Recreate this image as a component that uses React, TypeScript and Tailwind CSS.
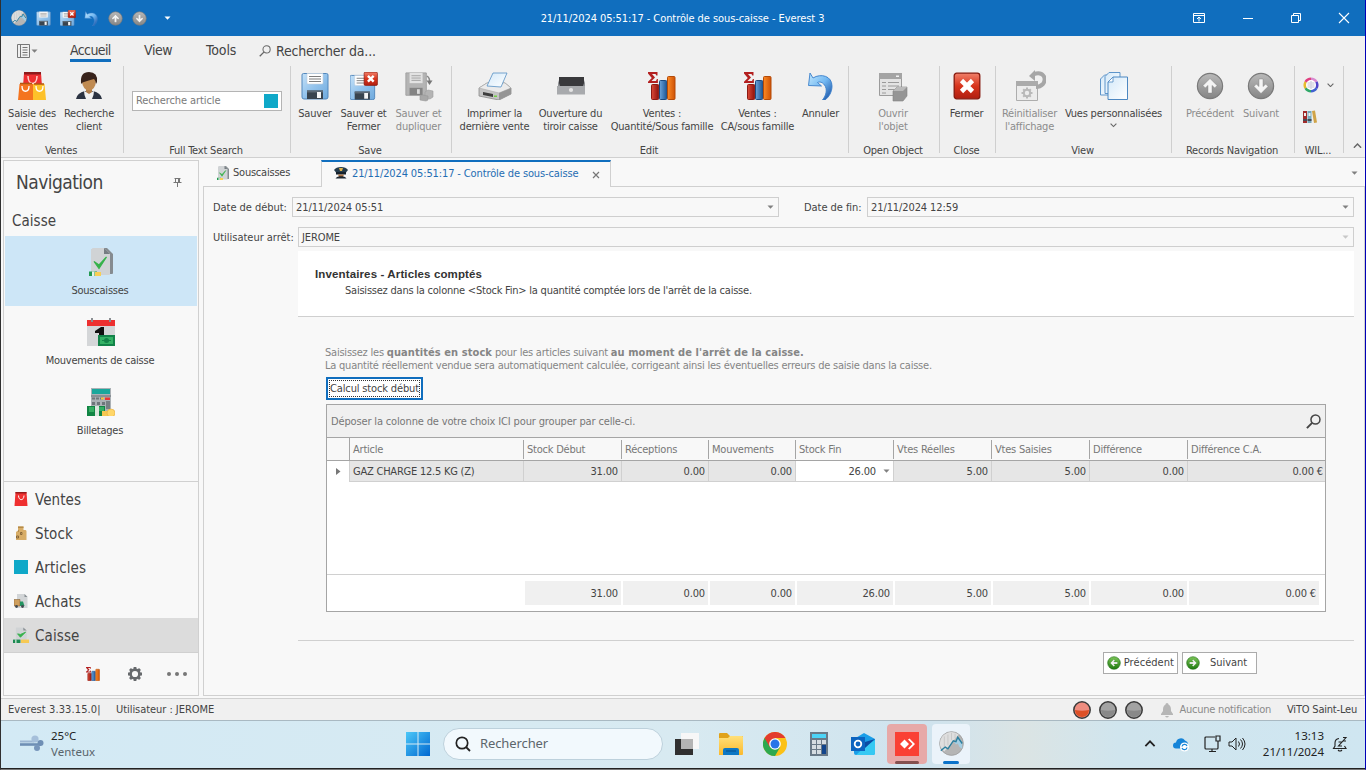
import React from "react";

type P = { children?: React.ReactNode; className?: string };

const Svg = ({ s = 28, vb = 28, children, className = "" }: P & { s?: number; vb?: number }) => (
  <svg width={s} height={s} viewBox={`0 0 ${vb} ${vb}`} className={`block shrink-0 ${className}`} fill="none">
    {children}
  </svg>
);

const Defs = () => (
  <svg width="0" height="0" className="absolute">
    <defs>
      <linearGradient id="disk" x1="0" y1="0" x2="1" y2="1"><stop offset="0" stopColor="#c4e1f8" /><stop offset=".5" stopColor="#93c3ec" /><stop offset="1" stopColor="#6ea9dd" /></linearGradient>
      <linearGradient id="red" x1="0" y1="0" x2="0" y2="1"><stop offset="0" stopColor="#f0806a" /><stop offset=".5" stopColor="#d8341c" /><stop offset="1" stopColor="#b01f10" /></linearGradient>
      <linearGradient id="grey" x1="0" y1="0" x2="0" y2="1"><stop offset="0" stopColor="#b9b9b9" /><stop offset="1" stopColor="#858585" /></linearGradient>
      <linearGradient id="green" x1="0" y1="0" x2="0" y2="1"><stop offset="0" stopColor="#7cc558" /><stop offset="1" stopColor="#1f7a10" /></linearGradient>
      <linearGradient id="undo" x1="0" y1="0" x2="1" y2="1"><stop offset="0" stopColor="#c4e9fd" /><stop offset=".5" stopColor="#72b8f2" /><stop offset="1" stopColor="#0f469c" /></linearGradient>
      <linearGradient id="barR"><stop offset="0" stopColor="#dc4a38" /><stop offset="1" stopColor="#8f120c" /></linearGradient>
      <linearGradient id="barB"><stop offset="0" stopColor="#6ba4dc" /><stop offset="1" stopColor="#1f5796" /></linearGradient>
      <linearGradient id="barO"><stop offset="0" stopColor="#fb8a26" /><stop offset="1" stopColor="#cf5205" /></linearGradient>
      <linearGradient id="page" x1="0" y1="0" x2="1" y2="1"><stop offset="0" stopColor="#d4e9f9" /><stop offset="1" stopColor="#ffffff" /></linearGradient>
      <linearGradient id="win" x1="0" y1="0" x2="1" y2="1"><stop offset="0" stopColor="#4cc8f8" /><stop offset="1" stopColor="#0067d0" /></linearGradient>
      <linearGradient id="folder" x1="0" y1="0" x2="0" y2="1"><stop offset="0" stopColor="#ffe07a" /><stop offset="1" stopColor="#fbb92c" /></linearGradient>
    </defs>
  </svg>
);

const DiskShape = () => (
  <g>
    <path d="M2.500 1.500h23q1.500 0 1.500 1.500v22q0 2-2 2H3q-2 0-2-2V3q0-1.500 1.500-1.500z" fill="url(#disk)" stroke="#5288bd" />
    <path d="M6 1.500h16V11q0 1-1 1H7q-1 0-1-1z" fill="#fff" stroke="#c3ced8" strokeWidth=".6" />
    <path d="M8 4.500h12M8 7h12M8 9.500h12" stroke="#7d7d7d" />
    <path d="M6 18.500h16V27H6z" fill="#39444f" /><path d="M6 18.500h16v2H6z" fill="#5d6975" />
    <path d="M16 20h4v6h-4z" fill="#f6f6f6" />
  </g>
);
const RedX = () => (
  <g>
    <rect x="1.200" y="1.200" width="25.600" height="25.600" rx="2.500" fill="url(#red)" stroke="#86180c" strokeWidth="1.300" />
    <path d="M8.500 8.500l11 11M19.500 8.500l-11 11" stroke="#fff" strokeWidth="4.600" />
  </g>
);
const Disk = ({ s = 28 }: { s?: number }) => <Svg s={s}><DiskShape /></Svg>;
const DiskClose = ({ s = 28 }: { s?: number }) => (
  <Svg s={s}><g transform="translate(-1 2) scale(.95)"><DiskShape /></g><g transform="translate(13.500 -.5) scale(.52)"><RedX /></g></Svg>
);
const DiskCopy = () => (
  <Svg s={30} vb={30}>
    <g transform="scale(.93)">
      <path d="M2 1h22v24H2z" fill="#b4b4b4" stroke="#a0a0a0" /><path d="M6 1h14v11H6z" fill="#e2e2e2" />
      <path d="M8 4h10M8 6.500h10M8 9h10" stroke="#a0a0a0" /><path d="M6 17h14v8H6z" fill="#848484" /><path d="M14 18.500h3v5h-3z" fill="#dcdcdc" />
    </g>
    <path d="M23 4q3 2 2.500 6" stroke="#888" strokeWidth="1.500" /><path d="M22.500 8.500h6L25.500 13z" fill="#777" />
    <path d="M21 20l3-2 5 1v6l-3 2-5-1z" fill="#b4b4b4" stroke="#9d9d9d" strokeWidth=".6" /><path d="M16 24l2-1 6 1v4l-2 1-6-1z" fill="#a8a8a8" stroke="#979797" strokeWidth=".6" />
  </Svg>
);
const Undo = ({ s = 28 }: { s?: number }) => (
  <Svg s={s}>
    <path d="M3 1l3 5C14 1 25 4 25 14c0 6-3 11-7 14h-2.500c4-5 5-11 2-15-2-3-5-3.500-7-2.500l4 3.500-13-.5z" fill="url(#undo)" stroke="#3a7fcb" strokeWidth=".9" />
  </Svg>
);
const ArrowBall = ({ s = 28, dir = 0, fill = "url(#grey)", ring = "#7a7a7a" }: { s?: number; dir?: number; fill?: string; ring?: string }) => (
  <Svg s={s}>
    <circle cx="14" cy="14" r="12.600" fill={fill} stroke={ring} strokeWidth="1.200" />
    <path transform={`rotate(${dir} 14 14)`} d="M14 6.500l7 7-2.200 2.400-2.800-2.500V21h-4v-7.600l-2.800 2.500L7 13.500z" fill="#f4f4f4" stroke={ring} strokeWidth=".4" />
  </Svg>
);
const Logo = ({ s = 16 }: { s?: number }) => (
  <Svg s={s}>
    <circle cx="14" cy="14" r="13.300" fill="#b5b5b5" stroke="#9a9a9a" strokeWidth=".8" /><path d="M1 14A13 13 0 0 1 22 4L6 23Q1 19 1 14z" fill="#dedede" />
    <path d="M6 6v12M10 4v12M14 2v8M18 3v5" stroke="#c5c5c5" />
    <path d="M16 11l3 1 2-5 5 7v6q-4-2-5-6l-2 1z" fill="#a5cfe4" /><path d="M2 22l5-4 3 2 6-9 3 1 2-5 5 7" stroke="#2b7f9f" strokeWidth="1.500" />
  </Svg>
);
const Bags = () => (
  <Svg>
    <path d="M6 1h17l2 27H4z" fill="#ee2e31" /><path d="M6 0h17v2.500H6z" fill="#8f1a1c" /><path d="M10 4c0 10 9 10 9 0" stroke="#ffd3cd" strokeWidth="1.500" />
    <path d="M1.500 12H15v16H0z" fill="#f4741f" /><path d="M15 12h11.500L28 28H15z" fill="#fdc12a" /><path d="M2 11.500h12M16 12h10" stroke="#b45512" strokeWidth="1.500" />
    <path d="M4 14c0 7 7 7 7 0M18 14c0 7 7 7 7 0" stroke="#fff" strokeWidth="1.300" />
  </Svg>
);
const Person = () => (
  <Svg>
    <path d="M1 27q1-6 9-8h8q8 2 9 8z" fill="#2b3342" /><path d="M9 19q0 4 2 8h6q2-4 2-8l-5 2z" fill="#f1f1f1" />
    <path d="M11 14h6v6l-3 2-3-2z" fill="#b07d49" /><ellipse cx="14" cy="10" rx="6.800" ry="8.600" fill="#c08b52" />
    <path d="M6 11Q5 0 14 0t8 10l-1 2q0-3-2-5Q15 8 9 10q-2 0-2 2z" fill="#38231b" />
  </Svg>
);
const Printer = () => (
  <svg width="34" height="28" viewBox="0 0 34 28" fill="none" className="block shrink-0">
    <path d="M1 16l8-5h18l6 5v6l-12 6L1 24z" fill="#c4c4c4" stroke="#8a8a8a" strokeWidth=".8" /><path d="M1 16l8-5h18l6 5-12 5z" fill="#ebebeb" stroke="#aaa" strokeWidth=".6" />
    <path d="M21 21l12-5v6l-12 6z" fill="#959595" /><path d="M15 1h14l-6 14-14-1z" fill="url(#page)" stroke="#5791c4" strokeWidth=".8" />
    <path d="M5 20l10 2v3L5 23z" fill="#3e3e3e" /><path d="M16 23.500h3v1.500h-3z" fill="#71cf43" />
  </svg>
);
const Drawer = () => (
  <Svg><path d="M2 5h25v10H2z" fill="#39393c" /><path d="M1 8l2 6v2H1zM28 8l-2 6v2h2z" fill="#8f9194" /><path d="M0 14h28v8.500H0z" fill="#a8aaad" /><circle cx="14" cy="18" r="2.100" fill="#e4e4e4" /></Svg>
);
const SigmaBars = ({ s = 28 }: { s?: number }) => (
  <Svg s={s}>
    <path d="M0 0h9.500v3.500H8.300L7.500 2H4l3 3.500L3.500 9H8l.9-2h1v4H0V9.700L3.800 6 0 1.500z" fill="#b32020" />
    <rect x="3.500" y="12.500" width="7.200" height="15" rx="1" fill="url(#barR)" stroke="#8d1a12" /><rect x="11.500" y="8.500" width="7.200" height="19" rx="1" fill="url(#barB)" stroke="#1c4a80" />
    <rect x="19.500" y="4.500" width="7.500" height="23" rx="1" fill="url(#barO)" stroke="#b44a08" />
  </Svg>
);
const OpenObj = () => (
  <Svg s={30} vb={30}>
    <path d="M1.500 1.500h22v22h-22z" fill="#e3e3e3" stroke="#9b9b9b" /><path d="M1 1h23v6H1z" fill="#a4a4a4" /><path d="M18 3.500h3v1.500h-3z" fill="#f2f2f2" />
    <path d="M4 10.500h4m2 0h11M4 14h4m2 0h11M4 17.500h4m2 0h11M4 21h4" stroke="#9a9a9a" /><path d="M15 19l4-4h10v9l-4 5H15z" fill="#959595" stroke="#858585" strokeWidth=".6" /><path d="M15 19l4-4h10l-4 4z" fill="#bababa" />
  </Svg>
);
const Reset = () => (
  <Svg s={32} vb={32} className="-mt-[2px]">
    <path d="M2.500 13.500h21v17h-21z" fill="#ececec" stroke="#adadad" /><path d="M2 11h22v5H2z" fill="#ababab" />
    <path d="M20 4c9-3 13 4 9 10q-3 3-7 3" stroke="#a6a6a6" strokeWidth="4" /><path d="M15 6l6-6v11z" fill="#a6a6a6" />
    <circle cx="13" cy="23" r="3.200" stroke="#b9b9b9" strokeWidth="2" /><path d="M13 17.500v2m0 7v2m-5.500-5.500h2m7 0h2m-9.300-3.800 1.400 1.400m4.800 4.800 1.400 1.400m0-7.600-1.400 1.400m-4.800 4.800-1.400 1.400" stroke="#b9b9b9" strokeWidth="2" />
  </Svg>
);
const Views = () => (
  <Svg>
    <path d="M.5 7l4-4H11v20H.5z" fill="url(#page)" stroke="#5e95ca" /><path d="M5 4.500l4-4h11v21H5z" fill="url(#page)" stroke="#5e95ca" /><path d="M8 10l5-5h14.500v22.500H8z" fill="url(#page)" stroke="#4d88c2" /><path d="M8 10h5V5z" fill="#fff" stroke="#4d88c2" strokeWidth=".8" />
  </Svg>
);
const Gear = () => (
  <Svg s={16} vb={16}><circle cx="8" cy="8" r="4.400" stroke="#66696c" strokeWidth="2.600" /><path d="M8 1v3m0 8v3M1 8h3m8 0h3M3 3l2 2m6 6 2 2m0-10-2 2m-6 6-2 2" stroke="#66696c" strokeWidth="2.800" /></Svg>
);
const DocCheck = ({ s = 28 }: { s?: number }) => (
  <Svg s={s}>
    <path d="M8 0h12l6 6v19q0 1-1 1H10z" fill="#858b90" /><path d="M5 1q0-1 1-1h11l6 6v20q0 1-1 1H5q-1 0-1-1V1z" fill="#d0d3d5" /><path d="M17 0v6h6z" fill="#767d82" />
    <path d="M7 13.500l5 3.500 7.500-8L12 20.500z" fill="#36b24a" stroke="#36b24a" strokeWidth="1.200" /><path d="M2 23.500h8V28H2z" fill="#239a50" /><path d="M5 23.500h2.500V28H5z" fill="#e9f2e9" /><path d="M8 24h6v4H8z" fill="#f8cf55" />
  </Svg>
);
const CaissePic = () => (
  <Svg s={16}><path d="M5 1h13l6 5v21H5z" fill="#d0d3d5" /><path d="M18 1v5h6z" fill="#8b9195" /><path d="M8 12l5 6 9-9-9 4z" fill="#36b24a" stroke="#36b24a" strokeWidth="1.500" /><path d="M0 22h13v6H0z" fill="#1c8a52" /><path d="M4 22h2v6H4z" fill="#e8f4e8" /><path d="M14 22h14v6H14z" fill="#f6c954" /></Svg>
);
const Calendar = () => (
  <Svg>
    <path d="M0 2h28v26H0z" fill="#d4d6d8" /><path d="M0 2h28v6H0z" fill="#ed3030" /><path d="M4 0h2v4H4zM22 0h2v4h-2z" fill="#8a8e92" />
    <path d="M8 13l6-4h3v19h-5V15H8z" fill="#111" /><path d="M11 17h17v11H11z" fill="#128349" /><path d="M13 19h13v7H13z" fill="#34b265" /><path d="M15 22.500h9" stroke="#128349" /><circle cx="19.500" cy="22.500" r="2.500" fill="#128349" />
  </Svg>
);
const Till = () => (
  <Svg>
    <path d="M4 0h20v27H4z" fill="#abb1b5" /><path d="M5 1h18v5H5z" fill="#1aa79c" /><path d="M4 8h20" stroke="#697076" /><path d="M5 9.500h3v2H5zm4 0h3v2H9zm4 0h3v2h-3zM5 14h3v3H5zm5 0h3v3h-3zm5 0h3v3h-3z" fill="#6f767b" />
    <path d="M14 9.500h3v2h-3z" fill="#f6c340" /><path d="M18 9.500h5v2.500h-5z" fill="#e93434" /><path d="M19 13h4v8h-4z" fill="#787f84" />
    <path d="M0 18h18v10H0z" fill="#118544" /><path d="M2 19h5v5H2zM12 19h5v4h-5z" fill="#35ad62" /><path d="M8 18h4v10H8z" fill="#dbe6dd" /><path d="M15 23h9v5h-9z" fill="#f7c751" /><circle cx="24" cy="25" r="4" fill="#ffd668" stroke="#e5ad3c" strokeWidth=".6" />
  </Svg>
);
const Officer = () => (
  <Svg s={14} vb={14}><path d="M0 4q2-3 7-3t7 3l-2 2.500H2z" fill="#243b4b" /><path d="M5 2h4l-1 3H6z" fill="#e0b34a" /><path d="M2 6h10v2.500H2z" fill="#16222c" /><path d="M4 8.500h6L9 11H5z" fill="#a87143" /><path d="M1.500 12.500q1-2 4-2.300h3q3 .3 4 2.300z" fill="#1d2730" /></Svg>
);
const Mag = ({ s = 13, c = "#505050", w = 1.3 }: { s?: number; c?: string; w?: number }) => (
  <Svg s={s} vb={13}><circle cx="8.200" cy="4.800" r="3.900" stroke={c} strokeWidth={w} /><path d="M5.300 7.700L.8 12.200" stroke={c} strokeWidth={w * 1.300} /></Svg>
);
const Down = () => <svg width="7" height="4" viewBox="0 0 7 4" className="block shrink-0"><path d="M.5 .5h6L3.500 3.700z" fill="#808080" /></svg>;
const Chev = ({ up = false, w = 8, c = "#666" }: { up?: boolean; w?: number; c?: string }) => (
  <svg width={w} height={w / 2 + 1} viewBox="0 0 8 5" className="block shrink-0" fill="none"><path d={up ? "M.7 4.300L4 1l3.300 3.300" : "M.7.700L4 4l3.300-3.300"} stroke={c} strokeWidth="1.300" /></svg>
);

const Btn = ({ icon, lines, className, off, menu }: { icon: React.ReactNode; lines: string[]; className: string; off?: boolean; menu?: boolean }) => (
  <div className={`flex flex-col items-center ${off ? "text-[#8c8c8c]" : "text-[#444]"} ${className}`}>
    <div className="flex h-[41px] items-start justify-center pt-[6px]">{icon}</div>
    {lines.map((l) => <div key={l} className="h-[13px] whitespace-nowrap leading-[13px]">{l}</div>)}
    {menu && <div className="pt-[3px]"><Chev w={7} /></div>}
  </div>
);
const Group = ({ title, className, children }: P & { title: string }) => (
  <div className={`flex h-[87px] shrink-0 flex-col border-r border-[#cfcfcf] ${className}`}>
    <div className="flex h-[76px] justify-center pr-[2px]">{children}</div>
    <div className="mt-[2px] h-[9px] pr-[2px] text-center leading-[14px]">{title}</div>
  </div>
);

const NavTile = ({ icon, label, on }: { icon: React.ReactNode; label: string; on?: boolean }) => (
  <div className={`mx-px flex h-[70px] flex-col items-center pt-3 ${on ? "bg-[#cde6f7]" : ""}`}>{icon}<div className="mt-[8px] pr-[2px] leading-[14px]">{label}</div></div>
);
const NavRow = ({ icon, label, on }: { icon: React.ReactNode; label: string; on?: boolean }) => (
  <div className={`flex h-[34px] items-center gap-[6px] pl-[9px] text-[15px] tracking-[0.1px] ${on ? "bg-[#dcdcdc]" : ""}`}><div className="flex w-4 justify-center">{icon}</div><span className="pt-[2px]">{label}</span></div>
);

const cols = "grid grid-cols-[23px_174px_98px_87px_87px_98px_98px_98px_98px_1fr]";
const heads = ["Article", "Stock Début", "Réceptions", "Mouvements", "Stock Fin", "Vtes Réelles", "Vtes Saisies", "Différence", "Différence C.A."];
const values = ["31.00", "0.00", "0.00", "26.00", "5.00", "5.00", "0.00", "0.00 €"];

const Title = () => (
  <header className="flex h-9 shrink-0 items-center bg-[#106ebe] text-white">
    <div className="flex w-[340px] items-center pl-[10px]">
      <Logo s={16} />
      <div className="ml-[9px]"><Disk s={15} /></div><div className="ml-[9px]"><DiskClose s={16} /></div><div className="ml-2"><Undo s={15} /></div>
      <div className="ml-[9px]"><ArrowBall s={15} /></div><div className="ml-[9px]"><ArrowBall s={15} dir={180} /></div>
      <svg width="7" height="4" viewBox="0 0 7 4" className="ml-[17px]"><path d="M.5 .5h6L3.500 3.700z" fill="#fff" /></svg>
    </div>
    <div className="flex-1 pr-[1px] pt-px text-center leading-4 tracking-[-0.08px]">21/11/2024 05:51:17 - Contrôle de sous-caisse - Everest 3</div>
    <div className="flex w-[340px] items-center justify-end pr-[15px]">
      <Svg s={12} vb={12}><path d="M.5 1.500h11v9H.5zM.5 3.500h11M6 9.500V5M4 7l2-2 2 2" stroke="#fff" /></Svg>
      <Svg s={12} vb={12} className="ml-[37px]"><path d="M1 6.500h10" stroke="#fff" /></Svg>
      <Svg s={12} vb={12} className="ml-[36px]"><path d="M1.500 3.500h7v7h-7zM3.500 3.500v-2h7v7h-2" stroke="#fff" /></Svg>
      <Svg s={12} vb={12} className="ml-[36px]"><path d="M1 1l10 10M11 1L1 11" stroke="#fff" strokeWidth="1.100" /></Svg>
    </div>
  </header>
);

const Ribbon = () => (
  <section className="flex h-[122px] shrink-0 flex-col border-b border-[#d0d0d0] bg-[#f0f0f0]">
    <div className="flex h-[30px] text-[14px] leading-7 tracking-[-0.6px] text-[#444]">
      <div className="flex w-[69px] items-center pl-4"><Svg s={14} vb={14}><path d="M.5 .5h12v13H.5zM3.500 .5v13M5.500 3.500h5m-5 2.500h5m-5 2.500h5m-5 2.500h5" stroke="#777" /></Svg><Down /></div>
      <div className="h-[26px] w-[41px] border-b-[3px] border-[#106ebe]">Accueil</div>
      <div className="ml-[33px] w-[62px] tracking-[-0.4px]">View</div>
      <div className="w-[53px] tracking-[-0.1px]">Tools</div>
      <div className="flex items-center gap-[5px]"><Mag s={12} c="#666" w={1.1} /><span className="tracking-[-0.2px]">Rechercher da...</span></div>
    </div>
    <div className="flex tracking-[-0.2px]">
      <Group title="Ventes" className="w-[123px]">
        <Btn icon={<Bags />} lines={["Saisie des", "ventes"]} className="w-[56px]" /><Btn icon={<Person />} lines={["Recherche", "client"]} className="w-[58px]" />
      </Group>
      <Group title="Full Text Search" className="w-[167px]">
        <div className="ml-[2px] mt-[25px] flex h-5 w-[150px] items-center justify-between border border-[#b4b4b4] bg-white px-[3px] tracking-[-0.1px] text-[#7a7a7a]"><span className="pt-px">Recherche article</span><div className="size-[14px] bg-[#0fa8c8]" /></div>
      </Group>
      <Group title="Save" className="w-[161px]">
        <Btn icon={<Disk />} lines={["Sauver"]} className="w-[43px]" /><Btn icon={<DiskClose />} lines={["Sauver et", "Fermer"]} className="w-[54px]" /><Btn icon={<DiskCopy />} lines={["Sauver et", "dupliquer"]} className="w-[56px]" off />
      </Group>
      <Group title="Edit" className="w-[397px]">
        <Btn icon={<Printer />} lines={["Imprimer la", "dernière vente"]} className="w-[80px]" /><Btn icon={<Drawer />} lines={["Ouverture du", "tiroir caisse"]} className="w-[72px]" />
        <Btn icon={<SigmaBars />} lines={["Ventes :", "Quantité/Sous famille"]} className="w-[111px]" /><Btn icon={<SigmaBars />} lines={["Ventes :", "CA/sous famille"]} className="w-[80px]" /><Btn icon={<Undo />} lines={["Annuler"]} className="w-[46px]" />
      </Group>
      <Group title="Open Object" className="w-[91px]"><Btn icon={<OpenObj />} lines={["Ouvrir", "l'objet"]} className="w-[60px]" off /></Group>
      <Group title="Close" className="w-[56px]"><Btn icon={<Svg><RedX /></Svg>} lines={["Fermer"]} className="w-[50px]" /></Group>
      <Group title="View" className="w-[176px]"><Btn icon={<Reset />} lines={["Réinitialiser", "l'affichage"]} className="ml-[2px] w-[60px]" off /><Btn icon={<Views />} lines={["Vues personnalisées"]} className="w-[108px]" menu /></Group>
      <Group title="Records Navigation" className="w-[123px]"><Btn icon={<ArrowBall />} lines={["Précédent"]} className="ml-[2px] w-[56px]" off /><Btn icon={<ArrowBall dir={180} />} lines={["Suivant"]} className="w-[46px]" off /></Group>
      <Group title="WIL..." className="w-[49px]">
        <div className="flex flex-1 flex-col gap-[17px] pl-2 pt-[11px]">
          <div className="flex items-center gap-2"><Svg s={16} vb={16}><g strokeWidth="3"><path d="M8 2A6 6 0 0 1 13.200 5" stroke="#d98ad0" /><path d="M13.200 5A6 6 0 0 1 13.200 11" stroke="#5045c8" /><path d="M13.200 11A6 6 0 0 1 8 14" stroke="#3f62cf" /><path d="M8 14A6 6 0 0 1 2.800 11" stroke="#2fa868" /><path d="M2.800 11A6 6 0 0 1 2.800 5" stroke="#e6bb2e" /><path d="M2.800 5A6 6 0 0 1 8 2" stroke="#e04080" /></g><circle cx="8" cy="8" r="5" fill="#fff" /><path d="M4.500 6h3m1 0h3m-7 2h3m1 0h3m-7 2h3m1 0h3M8 4v8" stroke="#b4b4cc" strokeWidth=".8" /></Svg><Chev w={7} /></div>
          <Svg s={14} vb={14}><path d="M0 1h4v12H0z" fill="#a12b2b" /><path d="M4.500 1h4v12h-4z" fill="#75a9bd" /><path d="M9 1l3-.500 2 12-3 .5z" fill="#d0a448" /><path d="M1 3h2v3H1zm4.500 0h2v3h-2z" fill="#eee" /><path d="M0 9h4v2H0zm4.500 0h4v2h-4z" fill="#4a4a55" /></Svg>
        </div>
      </Group>
      <div className="flex flex-1 items-end pb-[5px] pl-[9px]"><Chev up w={9} /></div>
    </div>
  </section>
);

const Sidebar = () => (
  <nav className="mt-[2px] flex h-[536px] w-[196px] shrink-0 flex-col border border-[#d0d0d0] bg-[#f8f8f8]">
    <div className="flex h-[43px] items-center justify-between pl-3 pr-4 text-[19px] leading-[42px] tracking-[-0.55px]"><span className="-mt-[2px]">Navigation</span>
      <Svg s={9} vb={9}><path d="M1.500 .5h6M2.500 .5v4h4v-4M.5 4.500h8M4.500 5v4M5.500 1v3" stroke="#777" /></Svg></div>
    <div className="h-[32px] pl-2 pt-px text-[15px] leading-8 tracking-[0.05px]">Caisse</div>
    <NavTile on icon={<DocCheck />} label="Souscaisses" /><NavTile icon={<Calendar />} label="Mouvements de caisse" /><NavTile icon={<Till />} label="Billetages" />
    <div className="mt-auto border-y border-[#d0d0d0]">
      <NavRow label="Ventes" icon={<Svg s={14}><path d="M3 0h22l2 28H1z" fill="#ef3030" /><path d="M3 0h22v3H3z" fill="#961b1b" /><path d="M9 7c0 11 11 11 11 0" stroke="#fff" strokeWidth="2" /></Svg>} />
      <NavRow label="Stock" icon={<Svg s={14}><path d="M8 1h11v7h4q2 0 2 3v17H4V12l4-3z" fill="#d8ad67" /><path d="M8 1h11v3H8z" fill="#b58a49" /><path d="M13 13h3v4h-3zM5 20h4v4H5zM8 10h2" stroke="#74562d" strokeWidth="1.500" /></Svg>} />
      <NavRow label="Articles" icon={<div className="size-[14px] bg-[#0fa8c8]" />} />
      <NavRow label="Achats" icon={<Svg s={14}><path d="M6 0h15l6 6v22H6z" fill="#d2d5d7" /><path d="M21 0v6h6z" fill="#899094" /><path d="M0 11h12v13H0z" fill="#cf9f5d" stroke="#79572c" /><path d="M12 15h6l3 9h-9z" fill="#239461" /><circle cx="5" cy="25" r="2.800" fill="#434a50" /><circle cx="17" cy="25" r="2.800" fill="#434a50" /></Svg>} />
      <NavRow on label="Caisse" icon={<CaissePic />} />
    </div>
    <div className="flex h-[42px] items-center pl-[82px]"><SigmaBars s={14} /><div className="ml-[27px]"><Gear /></div>
      <div className="ml-6 flex gap-1"><i className="size-1 rounded-full bg-[#777]" /><i className="size-1 rounded-full bg-[#777]" /><i className="size-1 rounded-full bg-[#777]" /></div></div>
  </nav>
);

const Field = ({ label, value, lw, className, faint }: { label: string; value: string; lw: string; className: string; faint?: boolean }) => (
  <div className={`flex items-center ${className}`}><div className={`pt-[2px] ${lw}`}>{label}</div>
    <div className="flex h-5 flex-1 items-center justify-between border border-[#cfcfcf] pl-[3px] pr-1"><span className="pt-[2px] tracking-[-0.1px]">{value}</span><span className={faint ? "opacity-40" : ""}><Down /></span></div></div>
);

const Grid = () => (
  <div className="flex h-[208px] w-[1000px] flex-col border border-[#a5a5a5] bg-white">
    <div className="flex h-[33px] items-center justify-between border-b border-[#a5a5a5] bg-[#f0f0f0] pl-1 pr-1 tracking-[-0.15px] text-[#777]"><span className="pt-[3px]">Déposer la colonne de votre choix ICI pour grouper par celle-ci.</span><Mag s={15} c="#444" /></div>
    <div className={`${cols} h-[23px] border-b border-[#a5a5a5] bg-[#f8f8f8] text-[#777]`}>
      <div className="border-r border-[#a5a5a5]" />
      {heads.map((h, i) => <div key={h} className={`my-[2px] flex items-center pl-[3px] pt-[2px] ${i < 8 ? "border-r border-[#a5a5a5]" : ""}`}>{h}</div>)}
    </div>
    <div className={`${cols} h-[21px]`}>
      <div className="flex items-center border-r border-[#d0d0d0] pl-[9px]"><svg width="5" height="7" viewBox="0 0 5 7"><path d="M0 0l4.500 3.500L0 7z" fill="#777" /></svg></div>
      <div className="flex items-center border-b border-r border-[#d0d0d0] bg-[#e6e6e6] pl-[3px] pt-[2px]">GAZ CHARGE 12.5 KG (Z)</div>
      {values.map((v, i) => (
        <div key={i} className={`flex items-center justify-end border-b border-[#d0d0d0] tracking-[-0.15px] ${i < 7 ? "border-r pr-[3px]" : "pr-[2px]"} ${i === 3 ? "gap-[7px] bg-white" : "bg-[#e6e6e6]"}`}><span className="pt-[2px]">{v}</span>{i === 3 && <Down />}</div>
      ))}
    </div>
    <div className="flex-1 border-b border-[#d0d0d0]" />
    <div className={`${cols} h-9 py-[6px]`}>
      <div /><div />
      {values.map((v, i) => <div key={i} className={`mx-px flex items-center justify-end bg-[#f0f0f0] pt-[2px] tracking-[-0.15px] ${i === 7 ? "mr-[6px]" : ""} pr-[3px]`}>{v}</div>)}
    </div>
  </div>
);

const Main = () => (
  <main className="ml-1 mt-[2px] flex flex-1 flex-col">
    <div className="flex h-[27px] shrink-0">
      <div className="flex w-[118px] items-center gap-[3px] border-b border-[#d0d0d0] pl-[13px]"><DocCheck s={14} /><span className="pt-px">Souscaisses</span></div>
      <div className="flex w-[290px] items-center border-x border-t-2 border-x-[#d0d0d0] border-t-[#106ebe] pl-3 text-[#1f6db3]"><div className="-mt-[3px]"><Officer /></div><span className="ml-[4px] tracking-[-0.12px]">21/11/2024 05:51:17 - Contrôle de sous-caisse</span>
        <Svg s={8} vb={8} className="ml-[14px]"><path d="M1 1l6 6M7 1L1 7" stroke="#777" strokeWidth="1.200" /></Svg></div>
      <div className="flex flex-1 items-center justify-end border-b border-[#d0d0d0] pr-[7px]"><Down /></div>
    </div>
    <div className="flex h-[509px] flex-col border border-t-0 border-[#d0d0d0] pl-[9px] pr-[10px]">
      <div className="mt-[10px] flex justify-between"><Field label="Date de début:" value="21/11/2024 05:51" lw="w-[79px] tracking-[-0.05px]" className="w-[566px]" /><Field label="Date de fin:" value="21/11/2024 12:59" lw="w-[63px] tracking-[-0.05px]" className="w-[550px]" /></div>
      <Field faint label="Utilisateur arrêt:" value="JEROME" lw="w-[85px] whitespace-nowrap tracking-[-0.02px]" className="mt-[10px]" />
      <div className="ml-[85px] mt-[4px] h-[66px] border-b border-[#cfcfcf] bg-white pl-[17px] pt-4">
        <div className="font-['Liberation_Sans',Arial,sans-serif] text-[11.500px] font-bold leading-[14px] tracking-[0.13px] text-[#333]">Inventaires - Articles comptés</div>
        <div className="pl-[30px] pt-[3px] leading-[14px]">Saisissez dans la colonne &lt;Stock Fin&gt; la quantité comptée lors de l'arrêt de la caisse.</div>
      </div>
      <div className="ml-[112px] mt-[29px] leading-[13px] text-[#858585]">Saisissez les <b className="tracking-[0.08px]">quantités en stock</b> pour les articles suivant <b className="tracking-[0.08px]">au moment de l'arrêt de la caisse.</b><br />La quantité réellement vendue sera automatiquement calculée, corrigeant ainsi les éventuelles erreurs de saisie dans la caisse.</div>
      <button className="ml-[113px] mt-[5px] h-[23px] w-[97px] border-2 border-[#106ebe] bg-white p-px"><span className="flex h-full items-center justify-center whitespace-nowrap border border-dotted border-[#333] pt-[2px] tracking-[-0.15px]">Calcul stock début</span></button>
      <div className="ml-[113px] mt-[4px]"><Grid /></div>
      <div className="ml-[85px] mt-7 border-t border-[#d0d0d0]" />
      <div className="mr-[97px] mt-[11px] flex justify-end gap-1">
        <button className="flex h-[22px] w-[75px] items-center justify-between border border-[#ababab] bg-white px-[3px]"><ArrowBall s={14} dir={270} fill="url(#green)" ring="#1b6b10" /><span className="pt-px tracking-[0.05px]">Précédent</span></button>
        <button className="flex h-[22px] w-[75px] items-center border border-[#ababab] bg-white pl-[3px]"><ArrowBall s={14} dir={90} fill="url(#green)" ring="#1b6b10" /><span className="ml-[10px] pt-px tracking-[-0.05px]">Suivant</span></button>
      </div>
    </div>
  </main>
);

const Lamp = ({ top, bottom }: { top: string; bottom: string }) => (
  <Svg s={18} vb={18}><circle cx="9" cy="9" r="8.200" fill={top} stroke="#3b3b3b" strokeWidth="1.500" /><path d="M2 9a7 7 0 0 0 14 0q-7 1.500-14 0z" fill={bottom} /></Svg>
);

const Status = () => (
  <footer className="mt-[2px] flex h-[22px] shrink-0 items-center border-t border-[#d0d0d0] bg-[#f0f0f0] pl-[7px] pr-[8px]">
    <span className="w-[94px] pt-px tracking-[0.1px]">Everest 3.33.15.0|</span><span className="ml-[14px] pt-px tracking-[-0.05px]">Utilisateur : JEROME</span>
    <div className="ml-auto flex items-center gap-2"><Lamp top="#ee8d80" bottom="#dd5026" /><Lamp top="#a3a3a3" bottom="#898989" /><Lamp top="#a3a3a3" bottom="#898989" /></div>
    <Svg s={16} vb={16} className="ml-4"><path d="M8 1a1.500 1.500 0 0 1 1.500 1.500C12 4 12 6 12 9l2 3v1H2v-1l2-3c0-3 0-5 2.500-6.500A1.500 1.500 0 0 1 8 1zM6 14h4q-2 3-4 0z" fill="#b6b6b6" /></Svg>
    <span className="ml-1 pt-px text-[#8a8a8a]">Aucune notification</span><span className="ml-4 pt-px tracking-[-0.2px]">ViTO Saint-Leu</span>
  </footer>
);

const Taskbar = () => (
  <div className="flex h-12 shrink-0 items-center border-t border-[#a9b9c2] bg-[linear-gradient(90deg,#d3eaf5_0%,#d8eaf1_50%,#cfe3ee_68%,#dbe4e4_75%,#d0e5ee_82%,#cfe6f1_100%)] pb-[2px] font-['Noto_Sans','Open_Sans',sans-serif] tracking-normal text-[#222]">
    <div className="flex w-[405px] items-center pl-[18px]">
      <Svg s={26} vb={26}><path d="M1 10.500h14" stroke="#9db7d3" strokeWidth="2" /><circle cx="16" cy="8" r="3.600" fill="#a5bfda" /><circle cx="21.500" cy="12" r="3" fill="#6f8fb5" /><path d="M1 13.500h21" stroke="#6f8fb5" strokeWidth="2.600" /><circle cx="18" cy="17" r="3" fill="#7796bb" /></Svg>
      <div className="ml-[6px] text-[11.500px] leading-4"><div>25°C</div><div className="text-[#59656c]">Venteux</div></div>
    </div>
    <Svg s={24} vb={24}><path d="M0 0h11.500v11.500H0zM12.500 0H24v11.500H12.500zM0 12.500h11.500V24H0zM12.500 12.500H24V24H12.500z" fill="url(#win)" /></Svg>
    <div className="ml-[13px] flex h-8 w-[220px] items-center rounded-full border border-[#bdd1dc] bg-[#f2f9fd] pl-[11px] text-[13px] text-[#5c666c]"><Svg s={16} vb={16}><circle cx="7" cy="7" r="5.700" stroke="#222" strokeWidth="1.700" /><path d="M11 11l4 4" stroke="#222" strokeWidth="1.800" /></Svg><span className="ml-[9px] tracking-[-0.1px]">Rechercher</span></div>
    <Svg s={24} vb={24} className="ml-[12px]"><path d="M6 1h18v16H6z" fill="#f7f7f7" /><path d="M0 7h18v16H0z" fill="#303030" /><path d="M6 7h12v10H6z" fill="#b4b4b4" /></Svg>
    <Svg s={26} vb={26} className="ml-[19px]"><path d="M1 3q0-1 1-1h7l3 3h13v8H1z" fill="#e0a21a" /><path d="M1 7h9l2-2h12q1 0 1 1v17q0 1-1 1H1z" fill="url(#folder)" /><path d="M5 24v-5q0-2 2-2h12q2 0 2 2v5z" fill="#0d78c4" /><path d="M8 20h10" stroke="#064e8b" /></Svg>
    <Svg s={24} vb={24} className="ml-[19px]"><circle cx="12" cy="12" r="12" fill="#fbc116" /><path d="M1.600 6A12 12 0 0 0 12 24l5.200-9L12 12V6z" fill="#2da94f" /><path d="M1.600 6A12 12 0 0 1 22.400 6H12l-5.200 9z" fill="#e33b2e" /><circle cx="12" cy="12" r="5.800" fill="#fff" /><circle cx="12" cy="12" r="4.500" fill="#2874e8" /></Svg>
    <Svg s={24} vb={24} className="ml-[20px]"><path d="M3 0h18v24H3z" fill="#697987" /><path d="M5 2h14v4H5z" fill="#4cd4f7" /><path d="M5 8h4v4H5zm5 0h4v4h-4zm5 0h4v4h-4zM5 13h4v4H5zm5 0h4v4h-4zM5 18h4v4H5zm5 0h4v4h-4z" fill="#d5dce1" /><path d="M15 13h4v9h-4z" fill="#12458c" /></Svg>
    <Svg s={24} vb={24} className="ml-[20px]"><path d="M3 7l10-6 11 6v14q0 2-2 2H5q-2 0-2-2z" fill="#1a9ee8" /><path d="M24 8v13q0 2-2 2H5L16 13z" fill="#35c9f3" /><path d="M14 10l10-3-10 9z" fill="#0a4ca4" /><path d="M0 5h14v14H0z" fill="#0c64c0" /><circle cx="7" cy="12" r="3.300" stroke="#fff" strokeWidth="1.800" /></Svg>
    <div className="ml-3 flex h-10 w-10 flex-col items-center justify-between rounded bg-[#e7a9a8] pt-2"><Svg s={24} vb={24}><path d="M0 0h24v24H0z" fill="#fa4034" /><path d="M9.500 7.500L14 12l-4.500 4.500L5 12zM13 7.500L17.500 12 13 16.500l1.500 1L20 12l-5.500-5.500z" fill="#fff" /></Svg><div className="h-[3px] w-6 rounded bg-[#84504f]" /></div>
    <div className="ml-[5px] flex h-10 w-[38px] flex-col items-center justify-between rounded bg-[#ebf3fa] pt-[7px]"><Logo s={25} /><div className="h-[3px] w-4 rounded bg-[#0b72c9]" /></div>
    <div className="ml-auto flex items-center pr-[17px]">
      <Chev up w={12} c="#222" />
      <Svg s={16} vb={16} className="ml-[17px]"><path d="M3 12.500a3 3 0 0 1 0-6 5 5 0 0 1 9-2q3 1 3 4v4z" fill="#1584d8" /><circle cx="11.500" cy="11" r="4.500" fill="#fff" /><path d="M9 10.500a2.600 2.600 0 0 1 5-.5M14 11.500a2.600 2.600 0 0 1-5 .5" stroke="#1584d8" strokeWidth="1.200" /></Svg>
      <Svg s={18} vb={18} className="ml-[15px]"><path d="M11 2H2q-1 0-1 1v10q0 1 1 1h11q1 0 1-1V9M5 16.500h7M8 14v2.500M12 1h4v5h-4zM14 6v5" stroke="#222" strokeWidth="1.200" /></Svg>
      <Svg s={18} vb={18} className="ml-[6px]"><path d="M1 7h3l4-4v12l-4-4H1zM10.500 6.500q2 2.500 0 5M12.500 4.500q4 4.500 0 9M14.500 3q5 6 0 12" stroke="#222" strokeWidth="1" /></Svg>
      <div className="ml-[13px] w-[65px] text-right text-[11.500px] leading-4"><div>13:13</div><div>21/11/2024</div></div>
      <Svg s={16} vb={16} className="ml-[8px]"><path d="M7 2.500Q3 3 3 7v3l-1.500 2.500H14L12.500 10M6 14q2 2 4 0" stroke="#222" strokeWidth="1.100" /><path d="M6.500 6h3.500L6.500 10H10M11 1.500h3L11 5h3" stroke="#222" strokeWidth="1.100" /></Svg>
    </div>
  </div>
);

export default function App() {
  return (
    <div className="flex h-[770px] w-[1366px] flex-col overflow-hidden border-b border-l border-r border-b-[#777] border-l-[#303030] border-r-[#0000b8] bg-[#f8f8f8] font-['DejaVu_Sans_Condensed','DejaVu_Sans',sans-serif] text-[11px] tracking-[-0.225px] text-[#444] [font-stretch:condensed]">
      <Defs />
      <Title />
      <Ribbon />
      <div className="flex h-[538px] shrink-0 pl-[2px] pr-0"><Sidebar /><Main /></div>
      <Status />
      <Taskbar />
      <div className="h-px shrink-0 bg-[#222]" />
    </div>
  );
}
